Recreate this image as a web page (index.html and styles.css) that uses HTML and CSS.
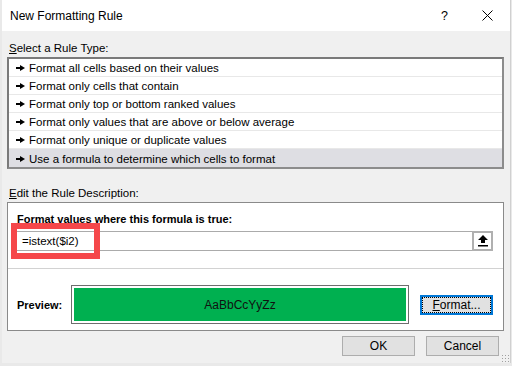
FILE: index.html
```html
<!DOCTYPE html>
<html>
	<head>
		<meta charset="utf-8" />
		<title>New Formatting Rule</title>
		<link rel="stylesheet" href="styles.css">
	</head>
	<body>
		<div class="dialog">
			<div class="titlebar">
				<span class="title">New Formatting Rule</span>
				<span class="help">?</span>
				<span class="close">
					<svg width="11" height="11" viewBox="0 0 11 11"><path d="M0.5 0.5 L10.5 10.5 M10.5 0.5 L0.5 10.5" stroke="#000" stroke-width="1" fill="none"/></svg>
				</span>
			</div>

			<div class="content">
				<div class="label"><u>S</u>elect a Rule Type:</div>
				<ul class="rules">
					<li><i class="arrow"></i>Format all cells based on their values</li>
					<li><i class="arrow"></i>Format only cells that contain</li>
					<li><i class="arrow"></i>Format only top or bottom ranked values</li>
					<li><i class="arrow"></i>Format only values that are above or below average</li>
					<li><i class="arrow"></i>Format only unique or duplicate values</li>
					<li class="selected"><i class="arrow"></i>Use a formula to determine which cells to format</li>
				</ul>

				<div class="label label-edit"><u>E</u>dit the Rule Description:</div>
				<div class="desc">
					<div class="desc-top">
						<div class="bold">Format values where this formula is true:</div>
						<div class="formula-row">
							<div class="formula">=istext($i2)</div>
							<div class="collapse">
								<svg width="10" height="12" viewBox="0 0 10 12"><path d="M5 0 L10 5 L7 5 L7 8 L3 8 L3 5 L0 5 Z" fill="#000"/><rect x="0" y="10" width="10" height="1.5" fill="#000"/></svg>
							</div>
							<div class="highlight"></div>
						</div>
					</div>
					<div class="desc-bottom">
						<div class="bold preview-label">Preview:</div>
						<div class="preview"><div class="swatch">AaBbCcYyZz</div></div>
						<div class="btn btn-focus"><span><u>F</u>ormat...</span></div>
					</div>
				</div>

				<div class="buttons">
					<div class="btn">OK</div>
					<div class="btn">Cancel</div>
				</div>
			</div>
			<div class="grip"></div>
		</div>
	</body>
</html>
```

FILE: styles.css
```css
body{
	margin: 0;
	background-color: #e9e9e9;
	font-family: "Liberation Sans", Arial, sans-serif;
	font-size: 11.5px;
	color: #000;
}

.dialog{
	width: 508px;
	height: 363px;
	margin-left: 2px;
	background-color: #f0f0f0;
	border-right: 1px solid #d0d0d0;
	position: relative;
}

.titlebar{
	height: 31px;
	background-color: #fff;
	display: flex;
	align-items: center;
	font-size: 12px;
}

.title{
	flex: 1;
	padding-left: 8px;
}

.help{
	width: 20px;
	margin-right: 21px;
	font-size: 12.5px;
}

.close{
	width: 28px;
	height: 11px;
	display: flex;
}

.content{
	padding: 10px 6px 0 5px;
}

.label{
	height: 14px;
	line-height: 14px;
	padding-left: 2px;
}

.label-edit{
	margin-top: 17px;
}

.rules{
	list-style: none;
	margin: 2px 0 0 0;
	padding: 0;
	height: 108px;
	background-color: #fff;
	border: 2px solid #7a7a7a;
	border-right-color: #8c8c8c;
	border-bottom-color: #8c8c8c;
}

.rules li{
	height: 16px;
	line-height: 16px;
	padding-top: 1px;
	border-bottom: 1px solid #e8e8e8;
	display: flex;
	align-items: center;
	padding-left: 7px;
	white-space: nowrap;
}

.rules li:last-child{
	border-bottom: none;
	height: 17px;
}

.rules .selected{
	background-color: #dedee3;
}

.arrow{
	display: inline-block;
	width: 0;
	height: 0;
	border-top: 3px solid transparent;
	border-bottom: 3px solid transparent;
	border-left: 5px solid #000;
	margin-right: 4px;
	position: relative;
	margin-left: 4px;
}

.arrow:before{
	content: "";
	position: absolute;
	left: -9px;
	top: -1px;
	width: 5px;
	height: 2px;
	background-color: #000;
}

.desc{
	margin-top: 2px;
	background-color: #fff;
	border: 1px solid #8a8a8a;
	height: 127px;
}

.desc-top{
	padding: 9px 10px 0 5px;
	height: 56px;
	border-bottom: 1px solid #d2d2d2;
}

.bold{
	font-weight: bold;
	font-size: 11px;
	height: 14px;
	line-height: 14px;
}

.desc-top .bold{
	padding-left: 4px;
}

.formula-row{
	margin-top: 5px;
	height: 20px;
	display: flex;
	position: relative;
}

.formula{
	flex: 1;
	border: 1px solid #ababab;
	border-right: none;
	line-height: 18px;
	padding-left: 8px;
}

.collapse{
	width: 17px;
	height: 16px;
	border: 2px solid #b0b0b0;
	background-color: #fff;
	display: flex;
	align-items: center;
	justify-content: center;
}

.highlight{
	position: absolute;
	left: -2px;
	top: -8px;
	width: 77px;
	height: 24px;
	border: 6px solid #f5474a;
}

.desc-bottom{
	display: flex;
	align-items: center;
	padding: 16px 10px 0 9px;
}

.preview-label{
	width: 54px;
}

.preview{
	width: 332px;
	height: 33px;
	border: 1px solid #6e6e6e;
	padding: 2px;
	margin-right: 11px;
}

.swatch{
	height: 100%;
	background-color: #00b050;
	display: flex;
	align-items: center;
	justify-content: center;
	font-size: 12px;
	color: #111;
}

.btn{
	width: 71px;
	height: 18px;
	background-color: #e1e1e1;
	border: 1px solid #adadad;
	display: flex;
	align-items: center;
	justify-content: center;
	font-size: 12px;
}

.btn-focus{
	border: 2px solid #0078d7;
	width: 69px;
	height: 16px;
}

.btn-focus span{
	border: 1px dotted #000;
	width: 67px;
	height: 14px;
	line-height: 14px;
	text-align: center;
}

.buttons{
	display: flex;
	justify-content: flex-end;
	gap: 11px;
	margin-top: 5px;
	padding-right: 5px;
}

.grip{
	position: absolute;
	right: 1px;
	bottom: 1px;
	width: 8px;
	height: 8px;
	background-image: radial-gradient(circle, #a0a0a0 0.8px, transparent 1px);
	background-size: 3px 3px;
}
```
